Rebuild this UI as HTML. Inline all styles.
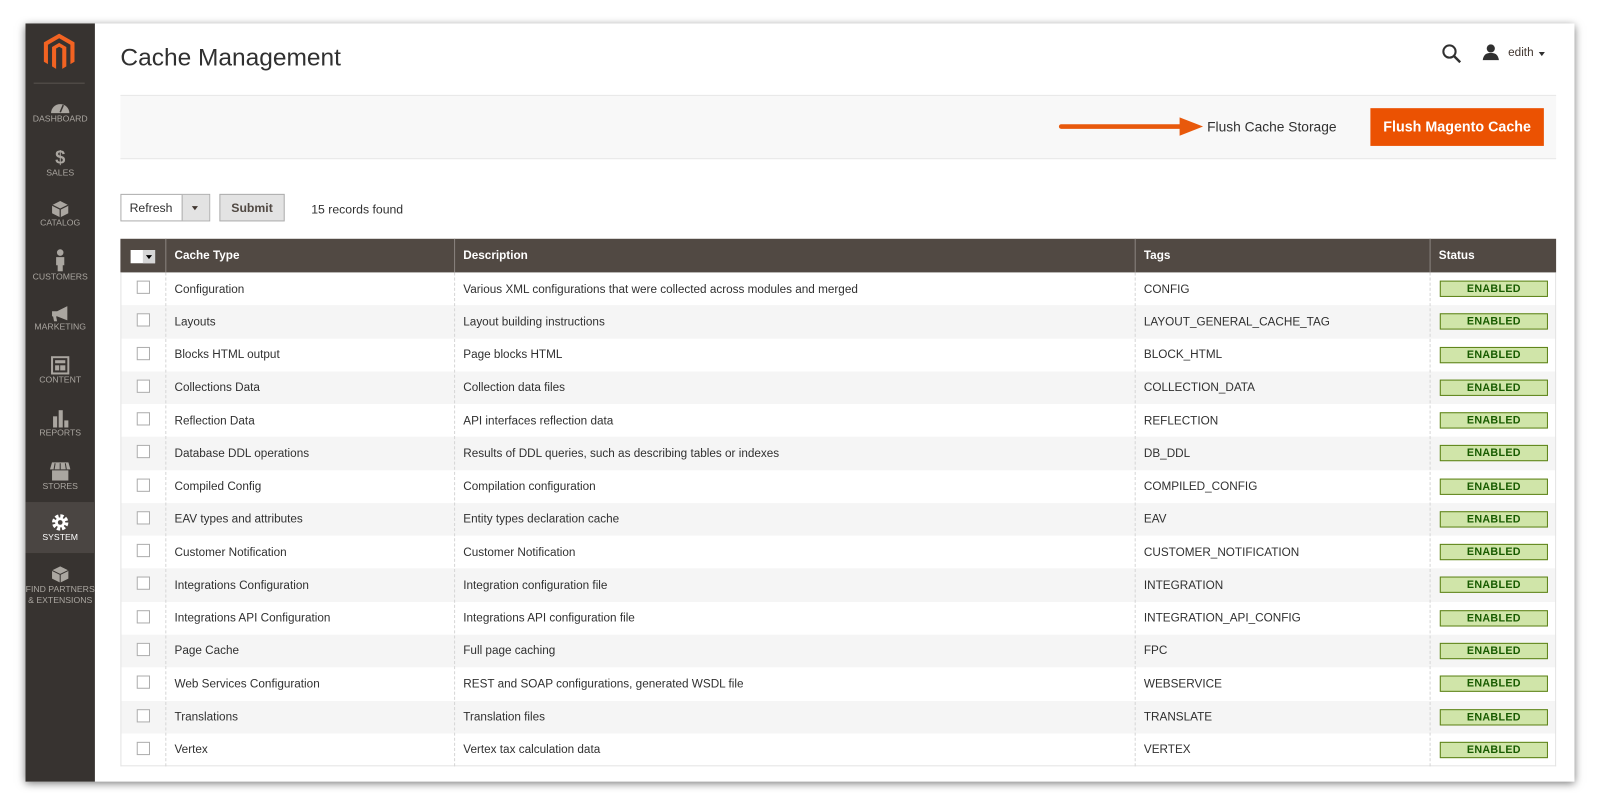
<!DOCTYPE html>
<html><head><meta charset="utf-8"><style>
*{box-sizing:border-box;margin:0;padding:0}
html,body{width:1600px;height:808px;overflow:hidden;background:#fff;font-family:"Liberation Sans",sans-serif}
#c{position:absolute;left:0;top:0;width:1568px;height:792px;transform:scale(1.0204);transform-origin:0 0}
.a{position:absolute}
#frame{left:25px;top:23px;width:1518px;height:743px;background:#fff;box-shadow:0 2px 8px rgba(0,0,0,.55)}
#side{left:25px;top:23px;width:68px;height:743px;background:#373330}
.it{position:absolute;left:25px;width:68px;text-align:center;color:#aaa6a0;font-size:8.5px;line-height:11px}
.it svg{display:block;margin:0 auto}
.t{font-size:11.5px;color:#303030;position:absolute;white-space:nowrap}
.row{position:absolute;left:118px;width:1407px;height:32.27px}
.en{position:absolute;left:1411px;width:106px;height:16px;background:#d0e5a9;border:1px solid #5b8116;color:#185b00;font-weight:bold;font-size:10.5px;text-align:center;line-height:14px;letter-spacing:.3px}
.cb{position:absolute;left:134px;width:13px;height:13px;border:1px solid #adadad;background:#fff}
.vl{position:absolute;width:0;border-left:1px dashed #d6d6d6}
</style></head><body><div id="c">
<div class="a" id="frame"></div>
<div class="a" id="side"></div>
<svg class="a" style="left:41px;top:33px" width="34" height="36" viewBox="0 0 34 36"><path d="M17 0L32 8.5V27.5L28 29.8V10.8L17 4.5 6 10.8V29.8L2 27.5V8.5Z M10 13L17 9 24 13V32L20 34.5V14.5L17 12.8 14 14.5V34.5L10 32Z" fill="#f26322"/></svg>
<div class="a" style="left:33px;top:81px;width:50px;height:1px;background:#5a5450"></div>
<div class="it" style="top:98px"><svg width="20" height="13" viewBox="0 0 20 13"><path d="M1 13A9 9 0 0 1 19 13Z" fill="#aaa6a0"/><path d="M10 12L13 5" stroke="#373330" stroke-width="1.5"/></svg>DASHBOARD</div>
<div class="it" style="top:145px"><div style="font-size:18px;font-weight:bold;line-height:19px">$</div>SALES</div>
<div class="it" style="top:197px"><svg width="16" height="16" viewBox="0 0 16 16"><path d="M8 0L16 4V12L8 16 0 12V4Z" fill="#aaa6a0"/><path d="M0 4L8 8 16 4M8 8V16" stroke="#373330" stroke-width="1.2" fill="none"/></svg>CATALOG</div>
<div class="it" style="top:244px"><svg width="10" height="22" viewBox="0 0 10 22"><circle cx="5" cy="3.5" r="3.2" fill="#aaa6a0"/><path d="M1 8H9V16H7.5V22H2.5V16H1Z" fill="#aaa6a0"/></svg>CUSTOMERS</div>
<div class="it" style="top:300px"><svg width="20" height="15" viewBox="0 0 20 15"><path d="M2 5H7L17 0V14L7 10H6L7 15H4L3 10H2Z" fill="#aaa6a0"/></svg>MARKETING</div>
<div class="it" style="top:349px"><svg width="18" height="18" viewBox="0 0 18 18"><rect x="1" y="1" width="16" height="16" fill="none" stroke="#aaa6a0" stroke-width="2"/><rect x="4" y="4" width="10" height="3" fill="#aaa6a0"/><rect x="4" y="9" width="4" height="5" fill="#aaa6a0"/><rect x="9" y="9" width="5" height="5" fill="#aaa6a0"/></svg>CONTENT</div>
<div class="it" style="top:401px"><svg width="18" height="18" viewBox="0 0 18 18"><rect x="2" y="7" width="4" height="11" fill="#aaa6a0"/><rect x="7.5" y="1" width="4" height="17" fill="#aaa6a0"/><rect x="13" y="11" width="4" height="7" fill="#aaa6a0"/></svg>REPORTS</div>
<div class="it" style="top:453px"><svg width="20" height="18" viewBox="0 0 20 18"><path d="M2 0H18L20 7H0Z" fill="#aaa6a0"/><path d="M2 8H18V18H2Z" fill="#aaa6a0"/><path d="M5 1L4 7M10 1V7M15 1L16 7" stroke="#373330"/></svg>STORES</div>
<div class="a" style="left:25px;top:492px;width:68px;height:50px;background:#4a4542"></div>
<div class="it" style="top:503px;color:#fff"><svg width="18" height="18" viewBox="0 0 18 18"><circle cx="9" cy="9" r="6" fill="none" stroke="#fff" stroke-width="4" stroke-dasharray="3 1.7"/><circle cx="9" cy="9" r="5" fill="#fff"/><circle cx="9" cy="9" r="2.3" fill="#4a4542"/></svg>SYSTEM</div>
<div class="it" style="top:554px"><svg width="18" height="18" viewBox="0 0 18 18"><path d="M9 1L17 5V13L9 17 1 13V5Z" fill="#aaa6a0"/><path d="M1 5L9 9 17 5M9 9V17" stroke="#373330" fill="none"/></svg>FIND PARTNERS<br>&amp; EXTENSIONS</div>

<div class="a" style="left:118px;top:43px;font-size:24px;color:#303030">Cache Management</div>
<svg class="a" style="left:1413px;top:43px" width="19" height="19" viewBox="0 0 19 19"><circle cx="7.5" cy="7.5" r="6" fill="none" stroke="#303030" stroke-width="2"/><path d="M12 12L18 18" stroke="#303030" stroke-width="2.4"/></svg>
<svg class="a" style="left:1453px;top:43px" width="16" height="16" viewBox="0 0 16 16"><circle cx="8" cy="4.5" r="4" fill="#303030"/><path d="M0 16C1 10 4 9 8 9S15 10 16 16Z" fill="#303030"/></svg>
<div class="a" style="left:1478px;top:46px;font-size:11.5px;color:#41362f">edith</div>
<div class="a" style="left:1508px;top:51px;border:3px solid transparent;border-top:4px solid #303030"></div>

<div class="a" style="left:118px;top:93px;width:1407px;height:63px;background:#f8f8f8;border-top:1px solid #e8e8e8;border-bottom:1px solid #e8e8e8"></div>
<svg class="a" style="left:1036px;top:113px" width="146" height="22" viewBox="0 0 146 22"><path d="M4 11H126" stroke="#e8590c" stroke-width="4.5" stroke-linecap="round"/><path d="M120 2L143 11 120 20Z" fill="#e8590c"/></svg>
<div class="a" style="left:1183px;top:117px;font-size:13.5px;color:#303030">Flush Cache Storage</div>
<div class="a" style="left:1343px;top:106px;width:170px;height:37px;background:#eb5202;color:#fff;font-size:14px;font-weight:bold;text-align:center;line-height:37px">Flush Magento Cache</div>

<div class="a" style="left:118px;top:190px;width:88px;height:27px;border:1px solid #adadad;background:#fff"></div>
<div class="a" style="left:178px;top:191px;width:27px;height:25px;background:#e3e3e3;border-left:1px solid #adadad"></div>
<div class="a" style="left:188px;top:202px;border:3px solid transparent;border-top:4px solid #41362f"></div>
<div class="t" style="left:127px;top:197px;font-size:12px">Refresh</div>
<div class="a" style="left:215px;top:190px;width:64px;height:27px;border:1px solid #adadad;background:#e3e3e3;font-size:12px;font-weight:bold;color:#514943;text-align:center;line-height:26px">Submit</div>
<div class="t" style="left:305px;top:198px;font-size:12px">15 records found</div>

<div class="a" style="left:118px;top:234px;width:1407px;height:33px;background:#514943"></div>
<div class="a" style="left:162px;top:234px;width:1px;height:33px;background:#8a837f"></div>
<div class="a" style="left:445px;top:234px;width:1px;height:33px;background:#8a837f"></div>
<div class="a" style="left:1112px;top:234px;width:1px;height:33px;background:#8a837f"></div>
<div class="a" style="left:1401px;top:234px;width:1px;height:33px;background:#8a837f"></div>
<div class="a" style="left:128px;top:245px;width:24px;height:13px;background:#fff"></div>
<div class="a" style="left:140px;top:245px;width:12px;height:13px;background:#d6d6d6"></div>
<div class="a" style="left:143px;top:250px;border:3px solid transparent;border-top:4px solid #000"></div>
<div class="t" style="left:171px;top:245px;color:#fff;font-weight:bold">Cache Type</div>
<div class="t" style="left:454px;top:245px;color:#fff;font-weight:bold">Description</div>
<div class="t" style="left:1121px;top:245px;color:#fff;font-weight:bold">Tags</div>
<div class="t" style="left:1410px;top:245px;color:#fff;font-weight:bold">Status</div>
<div id="rows"></div>
<div class="a" style="left:118px;top:267px;width:1407px;height:484px;border:1px solid #e3e3e3;border-top:none"></div>
<div class="vl" style="left:162px;top:267px;height:484px"></div>
<div class="vl" style="left:445px;top:267px;height:484px"></div>
<div class="vl" style="left:1112px;top:267px;height:484px"></div>
<div class="vl" style="left:1401px;top:267px;height:484px"></div>
</div>
<script>
var d=[["Configuration","Various XML configurations that were collected across modules and merged","CONFIG"],["Layouts","Layout building instructions","LAYOUT_GENERAL_CACHE_TAG"],["Blocks HTML output","Page blocks HTML","BLOCK_HTML"],["Collections Data","Collection data files","COLLECTION_DATA"],["Reflection Data","API interfaces reflection data","REFLECTION"],["Database DDL operations","Results of DDL queries, such as describing tables or indexes","DB_DDL"],["Compiled Config","Compilation configuration","COMPILED_CONFIG"],["EAV types and attributes","Entity types declaration cache","EAV"],["Customer Notification","Customer Notification","CUSTOMER_NOTIFICATION"],["Integrations Configuration","Integration configuration file","INTEGRATION"],["Integrations API Configuration","Integrations API configuration file","INTEGRATION_API_CONFIG"],["Page Cache","Full page caching","FPC"],["Web Services Configuration","REST and SOAP configurations, generated WSDL file","WEBSERVICE"],["Translations","Translation files","TRANSLATE"],["Vertex","Vertex tax calculation data","VERTEX"]];
var h="";
for(var i=0;i<15;i++){var y=267+i*32.27;
h+='<div class="row" style="top:'+y+'px;background:'+(i%2?'#f5f5f5':'#fff')+'"></div>';
h+='<div class="cb" style="top:'+(y+8)+'px"></div>';
h+='<div class="t" style="left:171px;top:'+(y+10.5)+'px">'+d[i][0]+'</div>';
h+='<div class="t" style="left:454px;top:'+(y+10.5)+'px">'+d[i][1]+'</div>';
h+='<div class="t" style="left:1121px;top:'+(y+10.5)+'px">'+d[i][2]+'</div>';
h+='<div class="en" style="top:'+(y+8)+'px">ENABLED</div>';}
document.getElementById("rows").outerHTML=h;
</script>
</body></html>
